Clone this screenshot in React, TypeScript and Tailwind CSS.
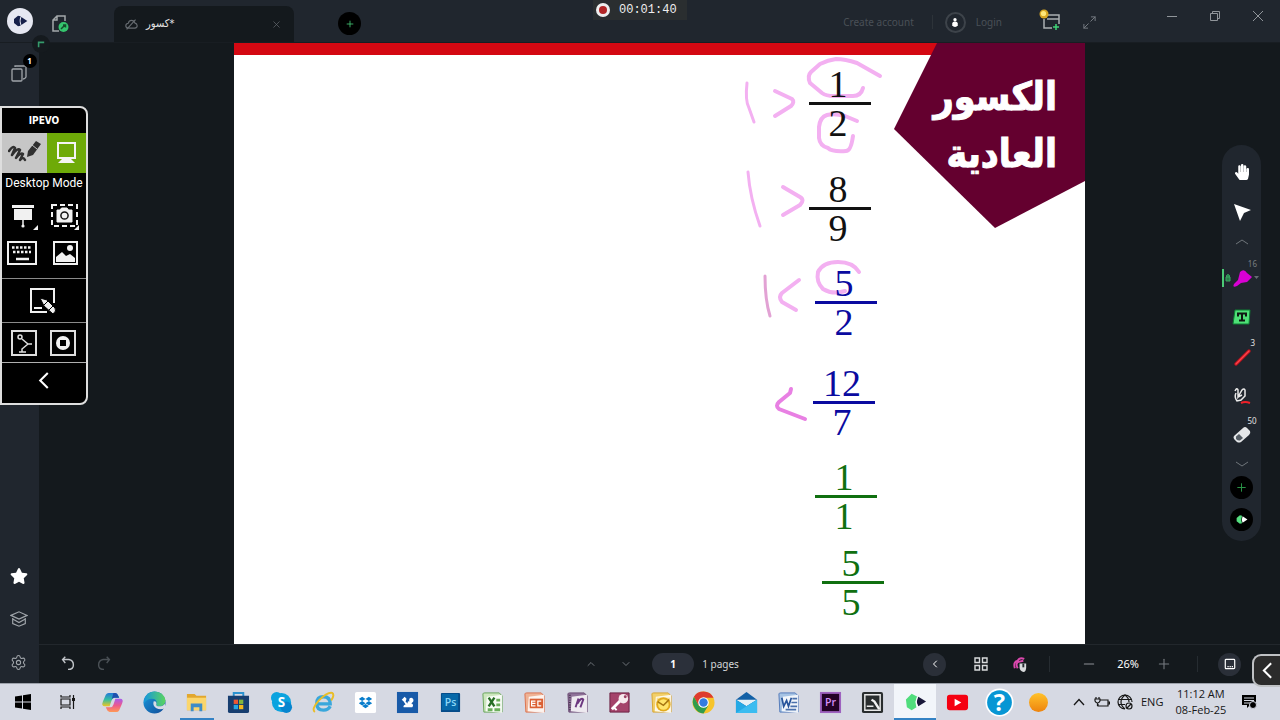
import type { ReactNode } from "react";
import { FaDropbox, FaHandPaper, FaStar } from "react-icons/fa";
import { ChevronDown, ChevronLeft, ChevronUp, Maximize2, Minus, Plus, Settings, X } from "lucide-react";

type FractionData = { top: string; bottom: string; place: string; color: string };

const fractions: FractionData[] = [
  { top: "1", bottom: "2", place: "left-[575px] top-[23px]", color: "text-[#111111]" },
  { top: "8", bottom: "9", place: "left-[575px] top-[128px]", color: "text-[#111111]" },
  { top: "5", bottom: "2", place: "left-[581px] top-[222px]", color: "text-[#0a0aa0]" },
  { top: "12", bottom: "7", place: "left-[579px] top-[322px]", color: "text-[#0a0aa0]" },
  { top: "1", bottom: "1", place: "left-[581px] top-[416px]", color: "text-[#107010]" },
  { top: "5", bottom: "5", place: "left-[588px] top-[502px]", color: "text-[#107010]" },
];

function Fraction({ top, bottom, place, color }: FractionData) {
  return (
    <div className={`absolute flex w-[62px] flex-col items-center font-['Liberation_Serif',serif] text-[38px] leading-[36px] ${color} ${place}`}>
      <span className="pr-[4px]">{top}</span>
      <span className="h-[3px] w-full bg-current" />
      <span className="pr-[4px]">{bottom}</span>
    </div>
  );
}

function Slide() {
  return (
    <section aria-label="Page 1" className="relative aspect-[851/601] h-full overflow-hidden bg-white">
      <div className="h-[12px] bg-[#d40812]" />
      <svg viewBox="0 0 851 601" className="absolute inset-0 h-full w-full" fill="none" strokeLinecap="round" strokeLinejoin="round">
        <path d="M703 0H851V138L761 185L660 86Z" fill="#64002f" />
        <g stroke="#f3b0f1" strokeWidth="4">
          <path d="M513 40Q511 58 515 65L520 79" strokeWidth="3" />
          <path d="M541 48L558 56Q561 59 557 63L541 73" />
          <path d="M646 33L623 20Q611 16 602 16Q594 17 586 21L577 29Q573 33 576 40L588 50Q592 53 600 53H619Q627 53 629 45" />
          <path d="M623 78L611 73Q600 70 593 72Q586 74 585 84V95Q586 103 594 105Q598 109 612 108Q617 108 619 93" />
          <path d="M514 129Q516 155 526 183" strokeWidth="3" />
          <path d="M549 144L566 154Q571 157 566 162L549 172" />
          <path d="M531 233C531 247 532 260 536 273" strokeWidth="3" stroke="#e2a2d4" />
          <path d="M565 237L548 250Q544 254 548 259L562 267" />
          <path d="M625 229Q619 219 604 219Q589 219 584 229Q582 239 589 246Q599 252 611 248" />
          <path d="M557 346L556 350L545 359Q541 363 545 366L571 376" stroke="#e880e3" />
        </g>
      </svg>
      <h1 dir="rtl" lang="ar" className="absolute top-[25px] right-[28px] font-['DejaVu_Sans_Condensed','DejaVu_Sans',sans-serif] text-[39px] leading-[57px] font-bold text-white [-webkit-text-stroke:1px_white]">
        الكسور
        <br />
        العادية
      </h1>
      {fractions.map((f) => (
        <Fraction key={f.place} {...f} />
      ))}
    </section>
  );
}

function IconButton({ label, className = "", children }: { label: string; className?: string; children: ReactNode }) {
  return (
    <button type="button" aria-label={label} className={`flex shrink-0 items-center justify-center ${className}`}>
      {children}
    </button>
  );
}

function CameraLogo({ front, back }: { front: string; back: string }) {
  return (
    <svg viewBox="0 0 24 24" className="h-full w-full">
      <path d="M3 9L9 4L13 5Q10 12 13 19L9 20L3 15Z" fill={back} />
      <path d="M14 6L23 12L14 18Q11.500 12 14 6Z" fill={front} />
    </svg>
  );
}

function Header() {
  return (
    <header className="relative flex h-[43px] shrink-0 items-end border-b border-[#181d22] bg-[#20262e]">
      <IconButton label="Main menu" className="mb-[8px] ml-[7px] h-[26px] w-[26px] rounded-full bg-[#e6e8f2] p-[5px]">
        <CameraLogo front="#16204a" back="#16204a" />
      </IconButton>
      <IconButton label="Open file" className="mb-[8px] ml-[18px] h-[20px] w-[20px]">
        <svg viewBox="0 0 20 20" className="h-full w-full" fill="none" stroke="#a3a8ab" strokeWidth="1.500">
          <path d="M8 17H2V6L6 2H14V7M6 2V6H2" />
          <circle cx="12.500" cy="13" r="5" fill="#35c56e" stroke="none" />
          <path d="M10 15L14 11M12 11H14.500V13.500" stroke="#154d2c" />
        </svg>
      </IconButton>
      <div className="ml-[43px] flex h-[36px] w-[180px] items-center rounded-t-[8px] bg-[#14191d] pr-[12px] pl-[11px]">
        <svg viewBox="0 0 16 16" className="h-[13px] w-[13px]" fill="none" stroke="#666b70" strokeWidth="1.400">
          <path d="M4 12.500Q1 12 1 9.500Q1 7 4 6.500Q5 3 8 3Q11 3 12 6Q15 7 15 9.500Q15 12 12 12.500ZM2 14L13 2" />
        </svg>
        <span dir="ltr" className="ml-[8px] font-['DejaVu_Sans_Condensed','DejaVu_Sans',sans-serif] text-[11px] leading-[16px] text-[#e7e7e7]">كسور*</span>
        <IconButton label="Close tab" className="ml-auto h-[12px] w-[12px] text-[#676c71]">
          <X size={11} strokeWidth={1.5} />
        </IconButton>
      </div>
      <IconButton label="New tab" className="mb-[7px] ml-[44px] h-[23px] w-[23px] rounded-full bg-black text-[#45c574]">
        <Plus size={10} strokeWidth={2} />
      </IconButton>
      <div className="absolute top-0 left-1/2 flex h-[20px] w-[94px] -translate-x-[47px] items-center gap-[9px] bg-[#2a2e30] pl-[3px] text-[12px]">
        <span className="flex h-[14px] w-[14px] items-center justify-center rounded-full bg-[#eeeeee]">
          <span className="h-[8px] w-[8px] rounded-full bg-[#b22626]" />
        </span>
        <time className="font-['Liberation_Mono',monospace] leading-[20px] text-[#eeeeee]">00:01:40</time>
      </div>
      <div className="mb-[8px] ml-auto flex items-center text-[10px] leading-[24px] text-[#4a5057]">
        <a href="#create-account">Create account</a>
        <span className="ml-[18px] h-[14px] w-px bg-[#2d3339]" />
        <span className="ml-[12px] flex h-[21px] w-[21px] items-center justify-center rounded-full border-2 border-[#3d434a]">
          <svg viewBox="0 0 8 12" className="h-[11px] w-[8px]" fill="#fff">
            <circle cx="4" cy="3" r="1.800" />
            <path d="M1 7Q1 5 4 5Q7 5 7 7V9Q6 11 4 11Q2 11 1 9Z" />
          </svg>
        </span>
        <a href="#login" className="ml-[10px]">Login</a>
      </div>
      <IconButton label="Add window" className="mb-[11px] ml-[37px] h-[22px] w-[22px]">
        <svg viewBox="0 0 22 22" className="h-full w-full" fill="none" strokeWidth="1.500">
          <path d="M13 19H5V10M9 6H20V15M8 10H20" stroke="#a9afb1" />
          <circle cx="5" cy="5" r="4.500" fill="#d9a824" />
          <circle cx="4.500" cy="4.500" r="2.600" fill="#ffe879" />
          <path d="M14 18H20M17 15V21" stroke="#3fd477" />
        </svg>
      </IconButton>
      <IconButton label="Full screen" className="mb-[12px] ml-[20px] h-[16px] w-[16px] text-[#737980]">
        <Maximize2 size={15} strokeWidth={1.6} />
      </IconButton>
      <div className="mr-[14px] mb-[18px] ml-[67px] flex gap-[27px] text-[#90959a]">
        <IconButton label="Minimize" className="h-[16px] w-[16px]">
          <svg viewBox="0 0 16 16" className="h-full w-full" stroke="currentColor"><path d="M3 8.500H13" /></svg>
        </IconButton>
        <IconButton label="Restore" className="h-[16px] w-[16px]">
          <svg viewBox="0 0 16 16" className="h-full w-full" fill="none" stroke="currentColor">
            <path d="M3.500 5.500H10.500V12.500H3.500ZM5.500 5V3.500H12.500V10.500H11" />
          </svg>
        </IconButton>
        <IconButton label="Close" className="h-[16px] w-[16px]">
          <svg viewBox="0 0 16 16" className="h-full w-full" stroke="currentColor"><path d="M3 3L13 13M13 3L3 13" /></svg>
        </IconButton>
      </div>
    </header>
  );
}

function Sidebar() {
  return (
    <aside className="relative flex w-[39px] shrink-0 flex-col items-center bg-[#20262e] pt-[20px] pr-[2px] pb-[11px] text-[#a0a5aa]">
      <IconButton label="Toggle corner menu" className="absolute -top-[8px] left-[32px] z-10 h-[18px] w-[18px] rounded-full bg-[#151a1e]">
        <svg viewBox="0 0 10 10" className="h-[8px] w-[8px]" fill="none" stroke="#359a6b" strokeWidth="2"><path d="M2 9V3H9" /></svg>
      </IconButton>
      <IconButton label="Pages" className="relative h-[20px] w-[20px]">
        <svg viewBox="0 0 20 20" className="h-full w-full" fill="none" stroke="currentColor" strokeWidth="1.300">
          <rect x="3" y="6" width="10" height="12" rx="1" />
          <path d="M6 4V3H17V14Q16 16 14 16" />
        </svg>
        <span className="absolute -top-[9px] left-[14px] flex h-[14px] w-[14px] items-center justify-center rounded-full bg-black text-[8px] font-bold text-white">1</span>
      </IconButton>
      <IconButton label="Favourites" className="mt-auto mb-[23px] h-[20px] w-[20px] text-white"><FaStar size={18} /></IconButton>
      <IconButton label="Learning" className="mb-[23px] h-[20px] w-[20px]">
        <svg viewBox="0 0 20 20" className="h-[18px] w-[18px]" fill="none" stroke="currentColor" strokeWidth="1.300">
          <path d="M1 6L10 2L19 6L10 10ZM3 9V15L10 18L17 15V9M3 10L10 14L17 10" />
        </svg>
      </IconButton>
      <IconButton label="Settings" className="h-[20px] w-[20px]"><Settings size={17} strokeWidth={1.5} /></IconButton>
    </aside>
  );
}

function ToolPalette() {
  return (
    <div role="toolbar" aria-label="Drawing tools" className="absolute top-[102px] right-[19px] flex h-[396px] w-[39px] flex-col items-center rounded-full bg-[#20262e] pt-[17px] text-[8px] leading-[10px] text-[#e0e0e0]">
      <IconButton label="Hand" className="h-[20px] w-[20px] text-white"><FaHandPaper size={16} /></IconButton>
      <IconButton label="Select" className="mt-[20px] h-[20px] w-[20px]">
        <svg viewBox="0 0 20 20" className="h-full w-full" fill="#fff"><path d="M2 2L19 8L12 11L8 19Z" /></svg>
      </IconButton>
      <IconButton label="Scroll tools up" className="mt-[15px] h-[10px] w-[20px]">
        <svg viewBox="0 0 14 6" className="h-[6px] w-[14px]" fill="none" stroke="#70767b"><path d="M1 5L7 1L13 5" /></svg>
      </IconButton>
      <IconButton label="Highlighter" className="relative mt-[20px] h-[22px] w-full">
        <span className="absolute left-0 h-[18px] w-[2px] bg-[#4bca76]" />
        <svg viewBox="0 0 39 22" className="h-full w-full">
          <path d="M4 10H8V14H4ZM4.500 10V8.500Q6 6.500 7.500 8.500V10" fill="#287c48" stroke="#39a861" strokeWidth="1" />
          <path d="M18 5Q22 1 25 6L30 10L25 15L19 16L15 19Q10 21 12 17L16 13Z" fill="#d900d4" />
          <path d="M32 9H37L34.500 12Z" fill="#666c71" />
        </svg>
        <span className="absolute -top-[8px] right-[4px] text-[#777c80]">16</span>
      </IconButton>
      <IconButton label="Text" className="mt-[18px] h-[20px] w-[20px]">
        <svg viewBox="0 0 20 20" className="h-full w-full">
          <path d="M3 3H18L17 17H1Z" fill="#4ee077" stroke="#0c7f32" />
          <path d="M5 5.500H15V9.500H13V7.500H11V12.500H13V14.500H7V12.500H9V7.500H7V9.500H5Z" fill="#101813" />
        </svg>
      </IconButton>
      <IconButton label="Line" className="relative mt-[20px] h-[20px] w-[20px]">
        <svg viewBox="0 0 20 20" className="h-full w-full" stroke="#b5121e" strokeWidth="3.500" strokeLinecap="round"><path d="M4 17L17 4" /><path d="M4 17L17 4" stroke="#ff4148" strokeWidth="1.500" /></svg>
        <span className="absolute -top-[9px] left-[19px]">3</span>
      </IconButton>
      <IconButton label="Ink pen" className="mt-[19px] h-[20px] w-[20px]">
        <svg viewBox="0 0 20 20" className="h-full w-full" fill="none" stroke="#e9e9e9" strokeWidth="1.500">
          <path d="M3 5Q5 1 6 4V11L10 4Q12 2 13 4V10L9 14L5 15Q2 11 4 7M6 11L10 9" />
          <path d="M9 17Q13 15 18 17" stroke="#ef2028" strokeWidth="2" />
        </svg>
      </IconButton>
      <IconButton label="Eraser" className="relative mt-[19px] h-[20px] w-[20px]">
        <svg viewBox="0 0 20 20" className="h-full w-full">
          <path d="M2 11L11 3Q13 1 15 3L18 6Q19 8 17 10L9 17Q7 18 5 17L2 14Q1 12 2 11Z" fill="#e4e6e8" />
          <path d="M4 11.500L7 9L11 13L8 15.500Q6 16 4 14Z" fill="#555d65" />
        </svg>
        <span className="absolute -top-[9px] left-[16px]">50</span>
      </IconButton>
      <IconButton label="Scroll tools down" className="mt-[14px] h-[10px] w-[20px]">
        <svg viewBox="0 0 14 6" className="h-[6px] w-[14px]" fill="none" stroke="#70767b"><path d="M1 1L7 5L13 1" /></svg>
      </IconButton>
      <IconButton label="Add tool" className="mt-[7px] h-[23px] w-[23px] rounded-full bg-black text-[#2a9547]"><Plus size={13} strokeWidth={1.8} /></IconButton>
      <IconButton label="Camera" className="mt-[9px] h-[23px] w-[23px] rounded-full bg-black p-[5px]"><CameraLogo front="#fff" back="#55df80" /></IconButton>
    </div>
  );
}

function IpevoPanel() {
  return (
    <div className="absolute top-[106px] left-0 z-20 flex w-[88px] flex-col rounded-r-[8px] border-2 border-[#dedede] bg-black text-white">
      <strong className="flex h-[25px] items-center justify-center font-['DejaVu_Sans_Condensed',sans-serif] text-[10px] leading-[16px]">IPEVO</strong>
      <div className="flex h-[40px]">
        <IconButton label="Annotation mode" className="w-[45px] bg-[#c6c6c6]">
          <svg viewBox="0 0 34 30" className="h-[30px] w-[34px]" fill="none" stroke="#303030" strokeWidth="2.500" strokeLinecap="round" strokeLinejoin="round">
            <path d="M1 13Q5 7 7 10L4 17Q10 9 12 12L8 20Q13 14 15 16L12 22Q15 18 17 22" />
            <path d="M19 19L20 13L28 3L33 6L25 17Z" fill="#303030" stroke="none" />
            <path d="M24 7L29 11" stroke="#c6c6c6" strokeWidth="1" />
          </svg>
        </IconButton>
        <IconButton label="Desktop mode" className="flex-1 bg-[#6eaa08]">
          <svg viewBox="0 0 24 26" className="h-[26px] w-[24px]" fill="none" stroke="#f4f4f4" strokeWidth="2">
            <rect x="3" y="3" width="17" height="15" /><path d="M8 18H15L20 23H3Z" fill="#f4f4f4" stroke="none" />
          </svg>
        </IconButton>
      </div>
      <span className="text-center font-['Roboto',sans-serif] text-[12px] leading-[20px] whitespace-nowrap">Desktop Mode</span>
      <div className="grid grid-cols-2 items-center justify-items-center border-b border-[#8a8a8a] pt-[4px] pb-[5px]">
        <IconButton label="Screen cover" className="h-[38px] w-[36px]">
          <svg viewBox="0 0 36 38" className="h-full w-full" fill="#f1f1f1">
            <path d="M7 8H29V11H7ZM9 12H27V23H9Z" /><path d="M18 23V29" stroke="#f1f1f1" strokeWidth="1.500" /><circle cx="18" cy="29" r="1.600" /><path d="M33 28V33H28Z" />
          </svg>
        </IconButton>
        <IconButton label="Snapshot" className="h-[38px] w-[36px]">
          <svg viewBox="0 0 36 38" className="h-full w-full" fill="none" stroke="#f1f1f1">
            <rect x="5" y="8" width="25" height="21" strokeWidth="2" strokeDasharray="5 3" />
            <path d="M10 13H13L14.500 11H20L21.500 13H25V25H10Z" fill="#f1f1f1" />
            <circle cx="17.500" cy="18.500" r="3.600" stroke="#111" strokeWidth="1.500" /><path d="M32 28V33H27Z" fill="#f1f1f1" stroke="none" />
          </svg>
        </IconButton>
        <IconButton label="Keyboard" className="h-[38px] w-[36px]">
          <svg viewBox="0 0 36 38" className="h-full w-full" fill="none" stroke="#f1f1f1" strokeWidth="2">
            <rect x="3" y="7" width="28" height="22" /><path d="M7 12.500H27M8 17H26" strokeDasharray="2.500 1.500" strokeWidth="2.500" /><path d="M11 24H24" strokeWidth="2.500" />
          </svg>
        </IconButton>
        <IconButton label="Gallery" className="h-[38px] w-[36px]">
          <svg viewBox="0 0 36 38" className="h-full w-full" fill="none" stroke="#f1f1f1" strokeWidth="2">
            <rect x="7" y="7" width="23" height="22" /><path d="M9 27V22L15 17L19 21L23 19L28 23V27Z" fill="#f1f1f1" stroke="none" /><circle cx="23" cy="13" r="3" fill="#f1f1f1" stroke="none" />
          </svg>
        </IconButton>
      </div>
      <IconButton label="Whiteboard" className="h-[44px] border-b border-[#8a8a8a]">
        <svg viewBox="0 0 30 30" className="mr-[2px] h-[30px] w-[30px]" fill="none" stroke="#f1f1f1" strokeWidth="2">
          <path d="M19 26H3V3H26V17M6 22H14" />
          <path d="M12 12L19 14L27 22Q29 25 25 28L16 20Z" fill="#f1f1f1" stroke="#000" strokeWidth="1" />
          <path d="M16 19L20 15M21 24L25 20" stroke="#000" strokeWidth="1" />
        </svg>
      </IconButton>
      <div className="flex h-[40px] items-center justify-center gap-[13px] border-b border-[#b0b0b0] pr-[2px]">
        <IconButton label="Document camera" className="h-[26px] w-[26px]">
          <svg viewBox="0 0 26 26" className="h-full w-full" fill="none" stroke="#dedede" strokeWidth="2">
            <rect x="1" y="1" width="24" height="24" /><circle cx="9" cy="7" r="2" strokeWidth="1.500" /><path d="M11 9L17 14H21M17 14L11 19V22M8 22H15" strokeWidth="1.500" />
          </svg>
        </IconButton>
        <IconButton label="Record screen" className="h-[26px] w-[26px]">
          <svg viewBox="0 0 26 26" className="h-full w-full" fill="none" stroke="#dedede" strokeWidth="2">
            <rect x="1" y="1" width="24" height="24" /><circle cx="13" cy="13" r="7" fill="#f1f1f1" stroke="none" /><path d="M10 10H16V16H10Z" fill="#000" stroke="none" />
          </svg>
        </IconButton>
      </div>
      <IconButton label="Collapse panel" className="h-[40px] pb-[6px]">
        <svg viewBox="0 0 12 18" className="h-[17px] w-[12px]" fill="none" stroke="#fff" strokeWidth="2.200"><path d="M10 1L2 9L10 17" /></svg>
      </IconButton>
    </div>
  );
}

function BottomBar() {
  return (
    <footer className="grid h-[39px] shrink-0 grid-cols-[1fr_auto_1fr] items-center border-t border-[#22272c] bg-[#14191d] text-[#9a9fa4]">
      <div className="flex gap-[16px] pl-[19px]">
        <IconButton label="Undo" className="h-[20px] w-[20px] text-[#c0c4c8]">
          <svg viewBox="0 0 20 20" className="h-[18px] w-[18px]" fill="none" stroke="currentColor" strokeWidth="1.600"><path d="M7 2L4 5L7 9M4 5H11Q16 6 16 11Q16 16 10 16" /></svg>
        </IconButton>
        <IconButton label="Redo" className="h-[20px] w-[20px] text-[#4a5055]">
          <svg viewBox="0 0 20 20" className="h-[18px] w-[18px]" fill="none" stroke="currentColor" strokeWidth="1.600"><path d="M13 2L16 5L13 9M16 5H9Q4 6 4 11Q4 16 10 16" /></svg>
        </IconButton>
      </div>
      <div className="flex items-center text-[10px] leading-[16px] text-[#d5d7d9]">
        <IconButton label="Previous page" className="h-[22px] w-[22px] text-[#777c81]"><ChevronUp size={12} strokeWidth={1.8} /></IconButton>
        <IconButton label="Next page" className="ml-[13px] h-[22px] w-[22px] text-[#777c81]"><ChevronDown size={12} strokeWidth={1.8} /></IconButton>
        <span className="ml-[15px] flex h-[22px] w-[42px] items-center justify-center rounded-full bg-[#2b303a] font-bold text-white">1</span>
        <span className="ml-[8px]">1 pages</span>
      </div>
      <div className="flex items-center justify-end pr-[39px]">
        <IconButton label="Collapse bar" className="h-[23px] w-[23px] rounded-full bg-[#2a2f38] text-white"><ChevronLeft size={12} /></IconButton>
        <IconButton label="Grid view" className="ml-[24px] h-[22px] w-[22px]">
          <svg viewBox="0 0 18 18" className="h-[18px] w-[18px]" fill="none" stroke="#d8dadc" strokeWidth="1.400"><path d="M3 3H7.500V7.500H3ZM10.500 3H15V7.500H10.500ZM3 10.500H7.500V15H3ZM10.500 10.500H15V15H10.500Z" /></svg>
        </IconButton>
        <IconButton label="Mouse drawing" className="ml-[17px] h-[22px] w-[22px]">
          <svg viewBox="0 0 18 18" className="h-[17px] w-[17px]" fill="none">
            <path d="M3 13Q1 6 6 5Q8 1 13 3M6 13Q3 7 8 6L12 5" stroke="#db48ae" strokeWidth="2" />
            <path d="M8 8H15V12Q15 17 12 17Q8 16 8 12Z" fill="#d8dadc" /><path d="M12 8V12" stroke="#252a30" strokeWidth="2" />
          </svg>
        </IconButton>
        <span className="ml-[18px] h-[16px] w-px bg-[#262c31]" />
        <IconButton label="Zoom out" className="ml-[28px] h-[22px] w-[22px] text-[#8d9297]"><Minus size={16} strokeWidth={1.6} /></IconButton>
        <span className="ml-[17px] text-[11px] leading-[16px] text-white">26%</span>
        <IconButton label="Zoom in" className="ml-[14px] h-[22px] w-[22px] text-[#777c81]"><Plus size={16} strokeWidth={1.6} /></IconButton>
        <span className="ml-[22px] h-[16px] w-px bg-[#262c31]" />
        <IconButton label="Fit page" className="ml-[20px] h-[23px] w-[23px] rounded-full bg-[#2a2f38]">
          <svg viewBox="0 0 14 14" className="h-[12px] w-[12px]" fill="none" stroke="#fff" strokeWidth="1.400"><rect x="1.500" y="1.500" width="11" height="11" rx="1" /><path d="M4 10H5.500M6.500 10H8M9 10H10.500" /></svg>
        </IconButton>
      </div>
    </footer>
  );
}

function OfficePage({ color, light, children }: { color: string; light: string; children: ReactNode }) {
  return (
    <>
      <path d="M2 3Q2 2 4 2H19L22 5V22H3Z" fill={light} stroke={color} strokeWidth="1" />
      <path d="M6 6L22 4V23L5 21Z" fill="#fff" fillOpacity="0.850" />
      {children}
    </>
  );
}

const apps: { name: string; active?: boolean; open?: boolean; art: ReactNode }[] = [
  {
    name: "Copilot",
    art: (
      <>
        <defs>
          <linearGradient id="copilot-a" x1="0" y1="0" x2="0" y2="1"><stop stopColor="#2277da" /><stop offset="0.500" stopColor="#35bea0" /><stop offset="1" stopColor="#f3c51f" /></linearGradient>
          <linearGradient id="copilot-b" x1="0" y1="0" x2="0" y2="1"><stop stopColor="#a55cf0" /><stop offset="0.500" stopColor="#ed5a8c" /><stop offset="1" stopColor="#ff9a55" /></linearGradient>
        </defs>
        <path d="M8 2H15Q17 2 18 5L19 7H14Q12 7 11 10L9 16H4Q0 16 2 11L5 4Q6 2 8 2Z" fill="url(#copilot-a)" />
        <path d="M13 2H15Q17 2 18 5L19 7H14Q12 7 11 9Z" fill="#1f4fae" />
        <path d="M16 22H9Q7 22 6 19L5 17H10Q12 17 13 14L15 8H20Q24 8 22 13L19 20Q18 22 16 22Z" fill="url(#copilot-b)" />
      </>
    ),
  },
  {
    name: "Edge",
    art: (
      <>
        <defs>
          <linearGradient id="edge-a"><stop stopColor="#1596dd" /><stop offset="1" stopColor="#5bd55d" /></linearGradient>
          <linearGradient id="edge-b" x1="0" y1="0" x2="1" y2="1"><stop stopColor="#1a9bde" /><stop offset="1" stopColor="#114a97" /></linearGradient>
        </defs>
        <circle cx="12" cy="12" r="11.500" fill="url(#edge-b)" />
        <path d="M1 10Q3 1 12 .5Q22 1 23.500 10Q23 16 17 16Q13 16 14 13Q15 8 9 8Q4 8 1 13Z" fill="url(#edge-a)" />
        <path d="M14 13Q13 16 17 16Q21 16 23 13L23 18Q18 20 14 18Q10 16 11 11Q14 10 14 13Z" fill="#d7dbe5" />
      </>
    ),
  },
  {
    name: "File Explorer",
    open: true,
    art: (
      <>
        <path d="M2 3H10L12 5H22V20H2Z" fill="#e2a72e" /><path d="M2 7H22V20H2Z" fill="#fbd66c" />
        <path d="M6 13H18V21H15V17H9V21H6Z" fill="#3e8cc7" />
      </>
    ),
  },
  {
    name: "Store",
    art: (
      <>
        <path d="M7 6V2H17V6" fill="none" stroke="#2b92d0" strokeWidth="2" /><path d="M1 5H23V21Q23 23 21 23H3Q1 23 1 21Z" fill="#173e70" />
        <path d="M7 9H11.500V13.500H7Z" fill="#ed5834" /><path d="M12.500 9H17V13.500H12.500Z" fill="#82b73d" /><path d="M7 14.500H11.500V19H7Z" fill="#27a7e4" /><path d="M12.500 14.500H17V19H12.500Z" fill="#f5b91b" />
      </>
    ),
  },
  {
    name: "Skype",
    art: (
      <>
        <circle cx="12" cy="12" r="10" fill="#0ba3df" /><circle cx="7" cy="7" r="6" fill="#0ba3df" /><circle cx="17" cy="17" r="6" fill="#0785cf" />
        <text x="12" y="17" fill="#fff" fontSize="14" fontWeight="700" textAnchor="middle">S</text>
      </>
    ),
  },
  {
    name: "Internet Explorer",
    art: (
      <>
        <path d="M19 16Q17 20 12 20Q5 20 5 13Q5 6 12 6Q19 6 19 13.500H6" fill="none" stroke="#39a7dc" strokeWidth="3.500" />
        <path d="M3 22Q-1 19 7 10Q16 1 21 2Q24 4 20 10" fill="none" stroke="#e9bd27" strokeWidth="2" />
      </>
    ),
  },
  { name: "Dropbox", art: <><rect x="1" y="1" width="22" height="22" rx="2" fill="#fff" /><FaDropbox x="5" y="5" size={14} color="#087dcc" /></> },
  {
    name: "UC Browser",
    art: (
      <>
        <rect x="1" y="1" width="22" height="22" fill="#185aa8" />
        <path d="M6 9L9 6L11 8L10 11L12 13Q12 10 14 11Q13 7 16 7Q19 8 18 11L16 13Q19 14 17 17H8Q7 15 10 14L8 11Z" fill="#fff" />
      </>
    ),
  },
  { name: "Photoshop", art: <><rect x="2" y="2" width="20" height="20" rx="1" fill="#064b88" /><rect x="3" y="3" width="17" height="17" fill="#0768a8" /><text x="12" y="16" fill="#8bd7f7" fontSize="11" fontWeight="600" textAnchor="middle">Ps</text></> },
  { name: "Excel", art: <OfficePage color="#65a455" light="#cde6be"><path d="M8 7L14 16M14 7L8 16" stroke="#286e26" strokeWidth="2.500" /><path d="M16 8H20V11H16ZM16 13H20V16H16ZM7 18H12V21H7ZM14 18H20V21H14Z" fill="#6bae5b" /></OfficePage> },
  { name: "PowerPoint", art: <OfficePage color="#db704b" light="#efb294"><path d="M7 8H21V18H7Z" fill="#db6034" /><path d="M13 10.500H9V15.500H13M9 13H13M19 10.500H15.500V15.500H19" fill="none" stroke="#fff" strokeWidth="1.300" /></OfficePage> },
  { name: "OneNote", art: <OfficePage color="#65456e" light="#8f7299"><path d="M4 4V20" stroke="#47344f" strokeWidth="2" strokeDasharray="1 1.500" /><path d="M10 17L13 8L12 13Q16 6 18 9L15 17" fill="none" stroke="#6d3880" strokeWidth="2" /></OfficePage> },
  {
    name: "Access",
    art: (
      <>
        <path d="M2 2H22V22H2Z" fill="#a4436a" stroke="#6d2144" /><path d="M4 19L13 10" stroke="#fff" strokeWidth="3" /><path d="M6 17L9 20" stroke="#fff" strokeWidth="2" />
        <circle cx="16" cy="8" r="5" fill="#f6e9ed" /><circle cx="18" cy="6" r="1.500" fill="#9b3e62" />
      </>
    ),
  },
  { name: "Outlook", art: <OfficePage color="#d7a52d" light="#f2cf69"><path d="M7 7H21V18H7Z" fill="#f9df91" /><circle cx="14" cy="14" r="7.500" fill="#e2aa1d" /><circle cx="14" cy="14" r="5.500" fill="#ffe56b" /><path d="M8 11L14 15L20 9" fill="none" stroke="#a67612" strokeWidth="1.500" /></OfficePage> },
  {
    name: "Chrome",
    art: (
      <>
        <circle cx="12" cy="12" r="11.500" fill="#f6c42b" /><path d="M2 6Q5 .5 12 .5Q19 .5 22.500 7H12L7 15Z" fill="#de3b2e" /><path d="M2 6Q-1 12 3 18Q6 23 12 23.500L17 15L12 17L7 15Z" fill="#309c4d" />
        <circle cx="12" cy="12" r="5.500" fill="#fff" /><circle cx="12" cy="12" r="4.400" fill="#337be1" />
      </>
    ),
  },
  { name: "Mail", art: <><path d="M1 9L12 1L23 9V23H1Z" fill="#1260a6" /><path d="M1 9H23L12 16Z" fill="#e4f0f6" /><path d="M1 9L12 16L23 9V23H1Z" fill="#23a9e5" /><path d="M1 23L23 9V23Z" fill="#3bbcf0" /></> },
  { name: "Word", art: <OfficePage color="#5078b9" light="#a6c3e4"><path d="M5 7L7 16L10 10L12 16L15 7" fill="none" stroke="#27549b" strokeWidth="1.800" /><path d="M16 8H21M15 12H21M14 16H21M9 19.500H20" stroke="#4b71ac" strokeWidth="1.800" /></OfficePage> },
  { name: "Premiere", art: <><rect x="2" y="2" width="20" height="20" fill="#230326" stroke="#9e62bf" strokeWidth="2" /><text x="12" y="16" fill="#d691fa" fontSize="11" fontWeight="600" textAnchor="middle">Pr</text></> },
  { name: "Annotator", art: <><rect x="1" y="1" width="22" height="22" rx="2" fill="#292d2e" /><path d="M4 4H20V20H4ZM6 16H13" fill="none" stroke="#e8e8e8" strokeWidth="1.500" /><path d="M11 9L14 11L19 19" stroke="#f2f2f2" strokeWidth="2.500" fill="none" /></> },
  { name: "Camera board", active: true, art: <><path d="M2 10L8 4L14 7Q11 12 13 18L8 21L3 18Z" fill="#50dd7d" /><path d="M15 7L23 12L15 17Q12 12 15 7Z" fill="#19183a" /><path d="M14 7Q11 12 14 18" fill="none" stroke="#fff" /></> },
  { name: "YouTube", art: <><rect x="1" y="4" width="22" height="16" rx="3" fill="#f50011" /><path d="M9 8L16 12L9 16Z" fill="#fff" /></> },
  { name: "Help", art: <><circle cx="12" cy="12" r="12.500" fill="#fff" /><circle cx="12" cy="12" r="11" fill="#0796d4" /><text x="12" y="19.500" fill="#fff" fontSize="21" fontWeight="700" textAnchor="middle">?</text></> },
];

function Taskbar() {
  return (
    <nav aria-label="Taskbar" className="relative flex h-[37px] shrink-0 border-t border-[#9ca1aa] bg-[#d6d9e3] text-[#171717]">
      <IconButton label="Start" className="w-[45px]">
        <svg viewBox="0 0 16 16" className="h-[16px] w-[16px]"><path d="M0 2.500L7 1.500V7.500H0ZM8 1.300L16 0V7.500H8ZM0 8.500H7V14.500L0 13.500ZM8 8.500H16V16L8 14.700Z" /></svg>
      </IconButton>
      <IconButton label="Task view" className="w-[46px]">
        <svg viewBox="0 0 16 16" className="h-[16px] w-[16px]" fill="none" stroke="#171717" strokeWidth="1.200"><path d="M1 1V3H10V1M1 15V13H10V15M1 5H10V11H1ZM13.500 1V15" /><path d="M12 4H15V7H12Z" fill="#171717" stroke="none" /></svg>
      </IconButton>
      <div className="flex flex-1">
        {apps.map((app) => (
          <button
            type="button"
            key={app.name}
            aria-label={app.name}
            className={`relative flex flex-1 items-center justify-center ${app.active ? "border-b-2 border-[#3482c4] bg-[#f2f5fa]" : ""}`}
          >
            <svg viewBox="0 0 24 24" className={app.name === "Help" ? "h-[27px] w-[27px] overflow-visible" : "h-[23px] w-[23px]"} fontFamily="Open Sans, sans-serif">{app.art}</svg>
            {app.open && <span className="absolute bottom-0 h-[2px] w-[34px] bg-[#3482c4]" />}
          </button>
        ))}
      </div>
      <div className="flex w-[259px] items-center font-['Open_Sans',sans-serif] text-[11px] leading-[16px]">
        <IconButton label="Weather" className="ml-[8px] h-[19px] w-[19px] rounded-full bg-linear-to-b from-[#ffc229] to-[#ed830d]"><span /></IconButton>
        <IconButton label="Hidden icons" className="ml-[23px] h-[20px] w-[16px]">
          <svg viewBox="0 0 12 8" className="h-[8px] w-[12px]" fill="none" stroke="#171717" strokeWidth="1.300"><path d="M1 7L6 1.500L11 7" /></svg>
        </IconButton>
        <svg viewBox="0 0 16 12" className="ml-[7px] h-[12px] w-[16px]" fill="none" stroke="#171717" strokeWidth="1.200"><path d="M6 4H14V10H4V8M14 6H15.500V8H14M2 1V3M5 1V3M1 3H6V5Q5 7 3.500 7Q2 7 1 5ZM3.500 7V10" /></svg>
        <svg viewBox="0 0 16 16" className="ml-[7px] h-[16px] w-[16px]" fill="none" stroke="#171717" strokeWidth="1.200">
          <path d="M15 8A7 7 0 1 0 8 15M1.500 5.500H14.500M1 10.500H8M8 1Q4 4 4 8Q4 12 8 15M8 1Q12 4 12 8" /><circle cx="12" cy="12" r="3" /><path d="M10 14L14 10" />
        </svg>
        <span className="ml-[8px]">ENG</span>
        <time className="ml-[12px] text-center">11:12 AM<br />08-Feb-25</time>
        <IconButton label="Notifications" className="ml-[15px] h-[18px] w-[17px]">
          <svg viewBox="0 0 17 18" className="h-full w-full"><path d="M1 2H15V12H9L6 15V12H1Z" /><path d="M3 5H13M3 7.500H13M3 10H10" stroke="#d6d9e3" /><circle cx="12" cy="12" r="3.500" stroke="#d6d9e3" /></svg>
        </IconButton>
      </div>
    </nav>
  );
}

export default function App() {
  return (
    <div className="relative flex h-screen flex-col overflow-hidden bg-[#14191d] font-['Noto_Sans','Open_Sans',sans-serif]">
      <Header />
      <div className="flex min-h-0 flex-1">
        <Sidebar />
        <div className="flex min-w-0 flex-1 flex-col">
          <main className="relative flex min-h-0 flex-1 justify-center">
            <Slide />
            <ToolPalette />
          </main>
          <BottomBar />
        </div>
      </div>
      <IpevoPanel />
      <Taskbar />
      <IconButton label="Show side panel" className="absolute right-0 bottom-[33px] z-20 h-[33px] w-[28px] rounded-l-[9px] border-2 border-r-0 border-[#bfc1c4] bg-[#2b2b2b]">
        <svg viewBox="0 0 12 18" className="h-[17px] w-[11px]" fill="none" stroke="#fff" strokeWidth="2.200"><path d="M10 1L2 9L10 17" /></svg>
      </IconButton>
    </div>
  );
}
